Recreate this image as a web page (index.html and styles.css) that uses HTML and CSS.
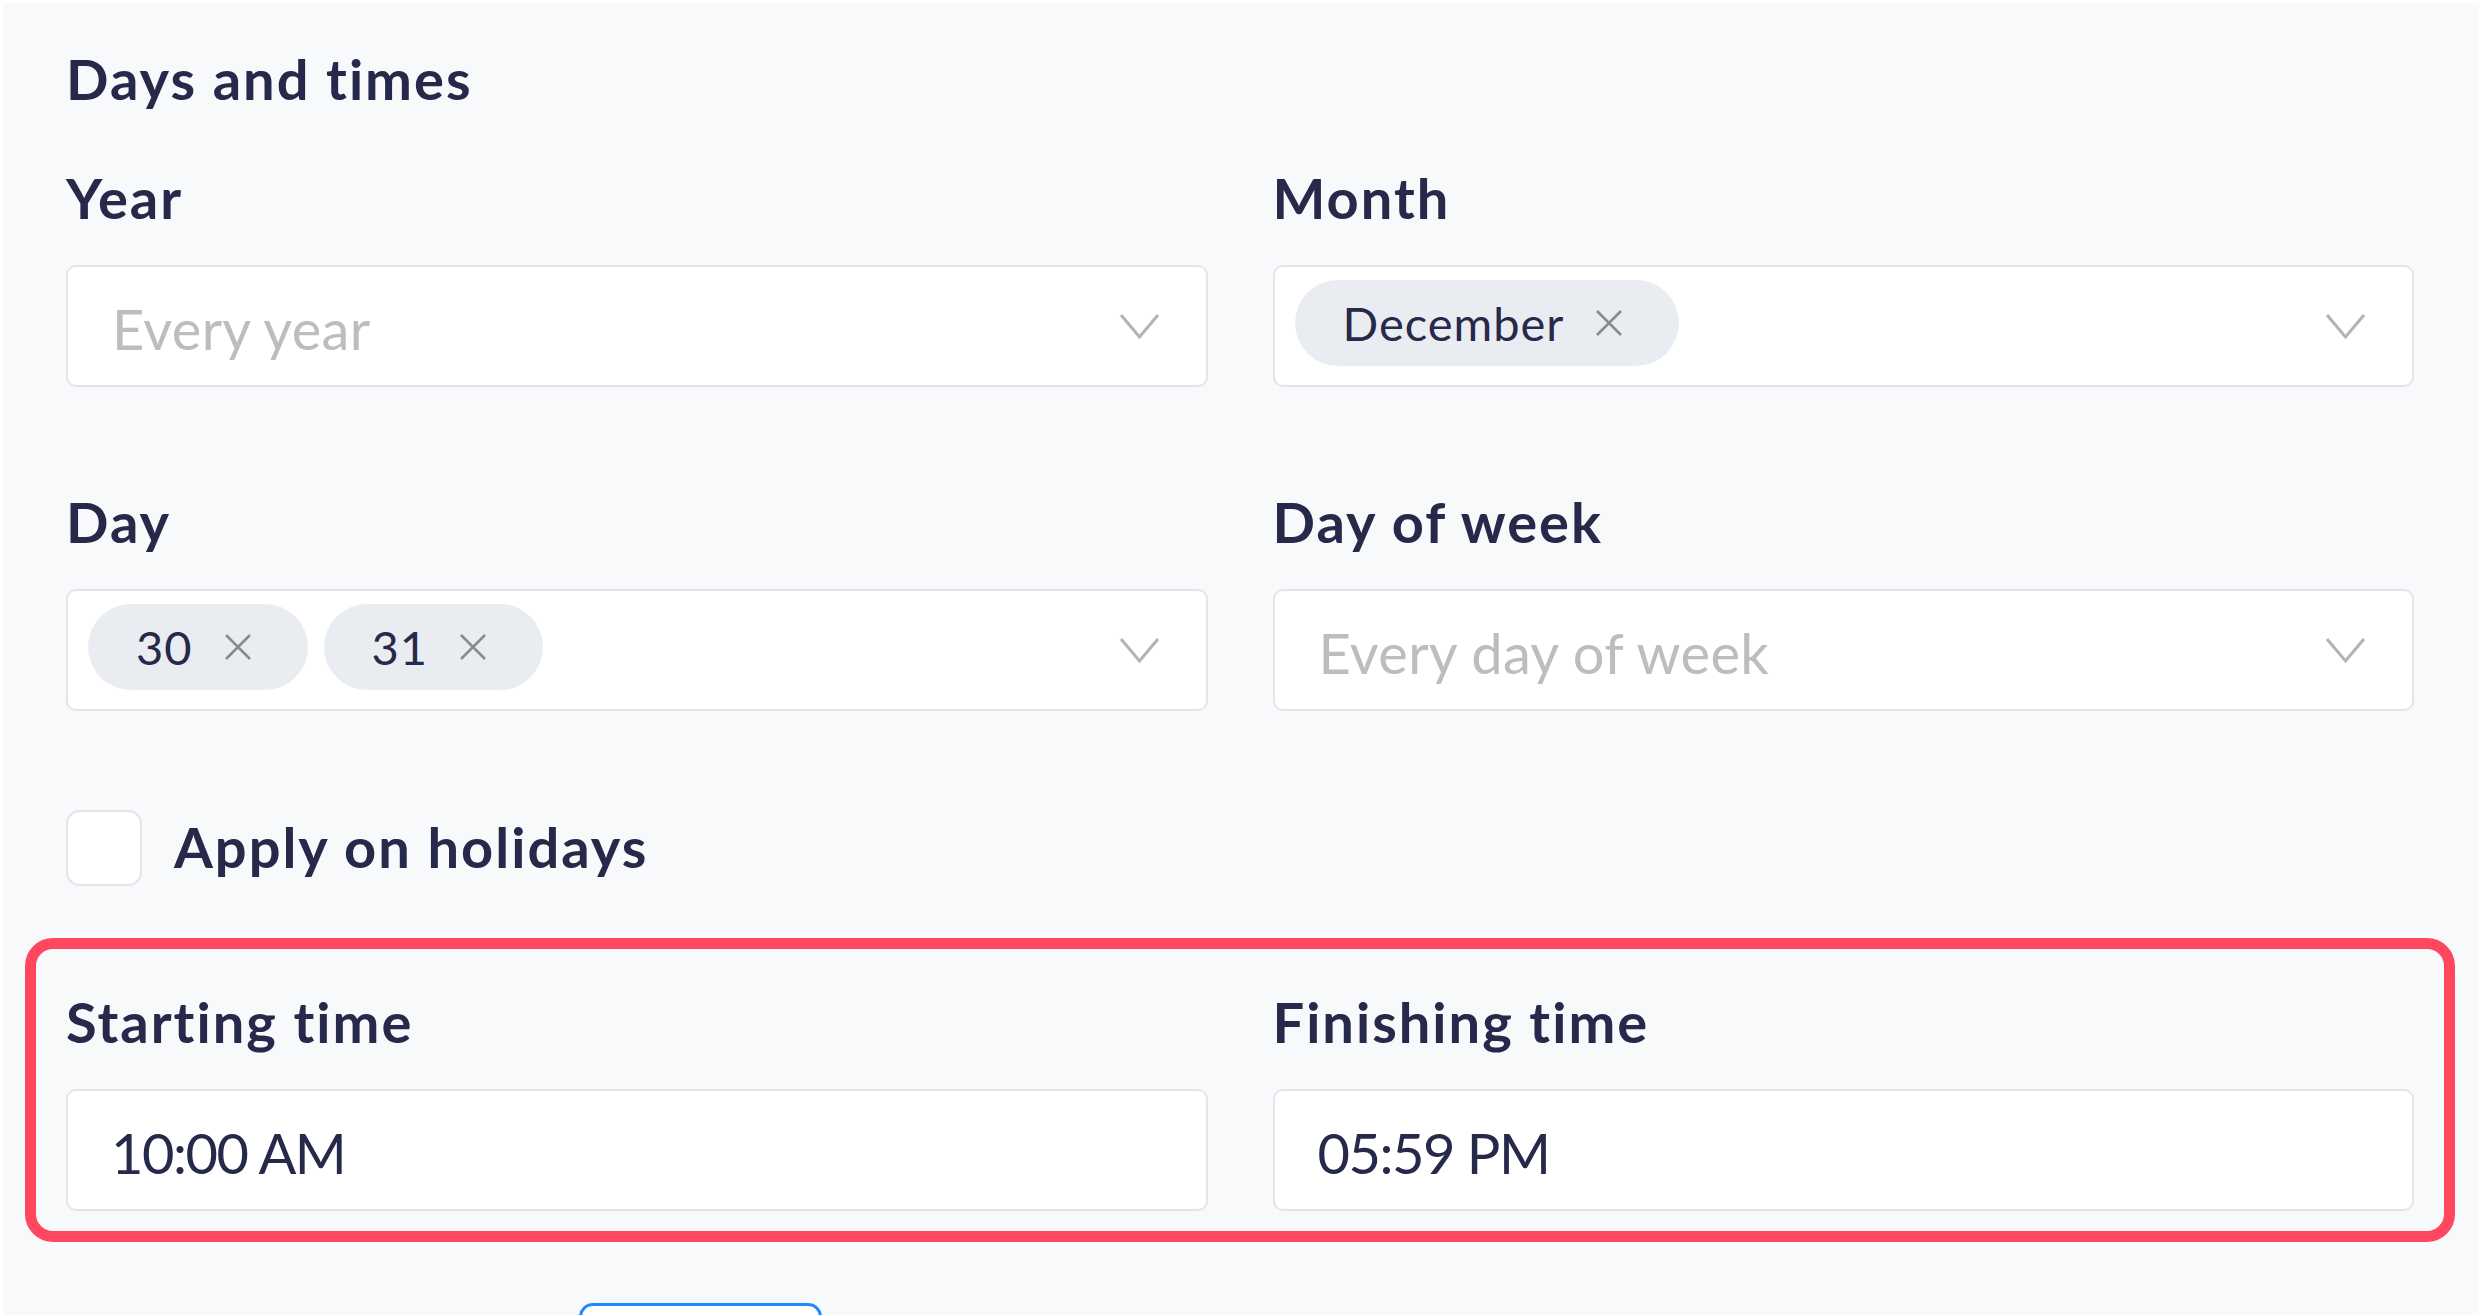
FILE: index.html
```html
<!DOCTYPE html>
<html lang="en">
<head>
    <meta charset="UTF-8">
    <meta name="viewport" content="width=device-width, initial-scale=1.0">
    <title>Days and times</title>
    <link rel="stylesheet" href="styles.css">
</head>
<body>
    <h2 class="section-title">Days and times</h2>

    <div class="field-grid">
        <div class="field">
            <label class="field-label">Year</label>
            <div class="select">
                <span class="placeholder">Every year</span>
                <svg class="chevron" width="41" height="27" viewBox="0 0 41 27"><polyline points="2,2 20.5,24 39,2" /></svg>
            </div>
        </div>

        <div class="field">
            <label class="field-label">Month</label>
            <div class="select">
                <div class="chips">
                    <span class="chip">December
                        <svg class="chip-x" width="28" height="28" viewBox="0 0 28 28"><line x1="2" y1="2" x2="26" y2="26" /><line x1="26" y1="2" x2="2" y2="26" /></svg>
                    </span>
                </div>
                <svg class="chevron" width="41" height="27" viewBox="0 0 41 27"><polyline points="2,2 20.5,24 39,2" /></svg>
            </div>
        </div>

        <div class="field">
            <label class="field-label">Day</label>
            <div class="select">
                <div class="chips">
                    <span class="chip">30
                        <svg class="chip-x" width="28" height="28" viewBox="0 0 28 28"><line x1="2" y1="2" x2="26" y2="26" /><line x1="26" y1="2" x2="2" y2="26" /></svg>
                    </span>
                    <span class="chip">31
                        <svg class="chip-x" width="28" height="28" viewBox="0 0 28 28"><line x1="2" y1="2" x2="26" y2="26" /><line x1="26" y1="2" x2="2" y2="26" /></svg>
                    </span>
                </div>
                <svg class="chevron" width="41" height="27" viewBox="0 0 41 27"><polyline points="2,2 20.5,24 39,2" /></svg>
            </div>
        </div>

        <div class="field">
            <label class="field-label">Day of week</label>
            <div class="select">
                <span class="placeholder">Every day of week</span>
                <svg class="chevron" width="41" height="27" viewBox="0 0 41 27"><polyline points="2,2 20.5,24 39,2" /></svg>
            </div>
        </div>
    </div>

    <label class="checkbox-row">
        <span class="checkbox"></span>
        <span class="checkbox-label">Apply on holidays</span>
    </label>

    <div class="time-box">
        <div class="field-grid">
            <div class="field">
                <label class="field-label" for="start-time">Starting time</label>
                <input class="time-input" type="text" id="start-time" value="10:00 AM">
            </div>
            <div class="field">
                <label class="field-label" for="end-time">Finishing time</label>
                <input class="time-input" type="text" id="end-time" value="05:59 PM">
            </div>
        </div>
    </div>

    <div class="actions">
        <button class="outline-button" type="button"></button>
    </div>
</body>
</html>
```

FILE: styles.css
```css
html {
    background-color: #f8f9fb;
}
body {
    font-family: Lato, 'Liberation Sans', sans-serif;
    color: #262949;
    background-color: #f8f9fb;
    margin: 0;
    padding: 42px 65px 0 63px;
    border-top: 3px solid #ffffff;
    border-left: 3px solid #ffffff;
    height: 1270px;
    overflow: hidden;
}
.section-title {
    font-size: 56px;
    font-weight: 700;
    line-height: 67px;
    letter-spacing: 2px;
    margin: 0 0 52px;
}
.field-grid {
    display: grid;
    grid-template-columns: 1fr 1fr;
    column-gap: 65px;
    row-gap: 101px;
}
.field {
    display: flex;
    flex-direction: column;
}
.field-label {
    font-size: 56px;
    font-weight: 700;
    line-height: 67px;
    letter-spacing: 2px;
    margin-bottom: 34px;
}
.select {
    height: 122px;
    box-sizing: border-box;
    background: #ffffff;
    border: 2px solid #e3e5ea;
    border-radius: 10px;
    display: flex;
    align-items: center;
    justify-content: space-between;
    padding: 0 46px 0 44px;
}
.placeholder {
    font-size: 56px;
    line-height: 67px;
    color: #bdbdbd;
    padding-top: 4px;
    letter-spacing: 0.3px;
}
.chevron polyline {
    fill: none;
    stroke: #b3b3b3;
    stroke-width: 3;
}
.select .chips {
    display: flex;
    gap: 16px;
    margin-left: -24px;
    margin-top: -6px;
}
.chip {
    display: inline-flex;
    align-items: center;
    gap: 31px;
    height: 86px;
    padding: 0 56px 0 48px;
    border-radius: 43px;
    background: #e9edf2;
    font-size: 47px;
    letter-spacing: 1px;
    color: #262949;
}
.chip-x line {
    stroke: #8a8a8a;
    stroke-width: 2.5;
}
.checkbox-row {
    display: flex;
    align-items: center;
    gap: 32px;
    margin-top: 99px;
}
.checkbox {
    width: 76px;
    height: 76px;
    box-sizing: border-box;
    border: 2px solid #e3e5ea;
    border-radius: 14px;
    background: #ffffff;
}
.checkbox-label {
    font-size: 56px;
    font-weight: 700;
    line-height: 67px;
    letter-spacing: 2px;
    margin-top: -4px;
}
.time-box {
    margin: 52px -41px 0;
    border: 11px solid #ff475f;
    border-radius: 28px;
    padding: 39px 30px 20px;
}
.time-input {
    height: 122px;
    box-sizing: border-box;
    background: #ffffff;
    border: 2px solid #e3e5ea;
    border-radius: 10px;
    padding: 4px 40px 0 43px;
    font-family: Lato, 'Liberation Sans', sans-serif;
    font-size: 56px;
    letter-spacing: -1.5px;
    color: #262949;
    width: 100%;
}
.actions {
    margin-top: 61px;
    padding-left: 513px;
}
.outline-button {
    width: 243px;
    height: 90px;
    border: 3px solid #1a8cff;
    border-radius: 14px;
    background: #ffffff;
}
```
